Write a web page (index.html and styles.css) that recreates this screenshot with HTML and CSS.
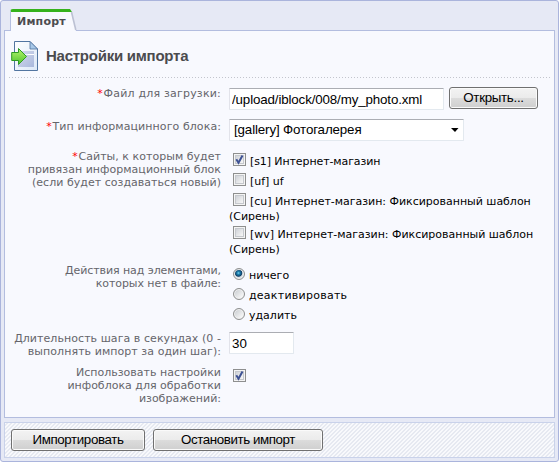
FILE: index.html
```html
<!DOCTYPE html>
<html lang="ru">
<head>
<meta charset="utf-8">
<title>Импорт</title>
<link rel="stylesheet" href="styles.css">
</head>
<body>
<form class="frame">
  <div class="tabs">
    <div class="tab"><span>Импорт</span><svg class="slope" width="9" height="22" viewBox="0 0 9 22"><path d="M0 1L2 3L7 22H0Z" fill="#f8f9fe"/><path d="M0 0H1L3 3H0Z" fill="#35b21c"/><path d="M2.500 3L6.800 21" stroke="#bcc1d3" stroke-width="1.600" fill="none"/></svg></div>
  </div>
  <main class="panel">
    <header class="title">
      <svg class="icon" width="28" height="31" viewBox="0 0 28 31">
        <defs>
          <linearGradient id="page" x2="1" y2="1"><stop stop-color="#fff"/><stop offset="1" stop-color="#dce8f7"/></linearGradient>
          <linearGradient id="block" x2="1" y2="1"><stop stop-color="#d5dbed"/><stop offset="1" stop-color="#a9b8dc"/></linearGradient>
          <linearGradient id="arrow" x2="0" y2="1"><stop stop-color="#b4f56c"/><stop offset="1" stop-color="#4fc32c"/></linearGradient>
        </defs>
        <path d="M3.500 .5H19L26.500 8V29.500H3.500Z" fill="url(#page)" stroke="#5275a0"/>
        <path d="M19 .5V8H26.500Z" fill="#a8c8e8" stroke="#5275a0" stroke-width=".8"/>
        <path d="M7 10H23V13H7ZM7 14H23V26H7Z" fill="url(#block)"/>
        <path d="M17 13.500H23" stroke="#fff"/>
        <path d="M.7 11.500H7.500V7.500L15.500 15.500L7.500 23.500V19.500H.7Z" fill="url(#arrow)" stroke="#2d9b22"/>
      </svg>
      <h1>Настройки импорта</h1>
    </header>
    <div class="row file">
      <div class="label"><b>*</b>Файл для загрузки:</div>
      <div class="value line"><input class="field path" type="text" value="/upload/iblock/008/my_photo.xml"><button type="button" class="button open">Открыть...</button></div>
    </div>
    <div class="row kind">
      <div class="label"><b>*</b>Тип информацинного блока:</div>
      <div class="value"><div class="field select"><span>[gallery] Фотогалерея</span><svg width="8" height="4" viewBox="0 0 8 4"><path d="M0 0H7.500L4 4Z"/></svg></div></div>
    </div>
    <div class="row sites">
      <div class="label"><b>*</b>Сайты, к которым будет<br>привязан информационный блок<br>(если будет создаваться новый)</div>
      <div class="value">
        <label class="site first"><i class="check"><svg width="11" height="11" viewBox="0 0 11 11"><path d="M2.300 5.200L4.500 8.700L8.500 1.500" /></svg></i><span>[s1] Интернет-магазин</span></label>
        <label class="site"><i class="check"></i><span>[uf] uf</span></label>
        <label class="site"><i class="check"></i><span>[cu] Интернет-магазин: Фиксированный шаблон</span></label>
        <div class="wrap">(Сирень)</div>
        <label class="site"><i class="check"></i><span>[wv] Интернет-магазин: Фиксированный шаблон</span></label>
        <div class="wrap">(Сирень)</div>
      </div>
    </div>
    <div class="row actions">
      <div class="label">Действия над элементами,<br>которых нет в файле:</div>
      <div class="value">
        <label class="option"><i class="radio on"></i><span>ничего</span></label>
        <label class="option wide"><i class="radio"></i><span>деактивировать</span></label>
        <label class="option"><i class="radio"></i><span>удалить</span></label>
      </div>
    </div>
    <div class="row step">
      <div class="label">Длительность шага в секундах (0 -<br>выполнять импорт за один шаг):</div>
      <div class="value"><input class="field seconds" type="text" value="30"></div>
    </div>
    <div class="row images">
      <div class="label">Использовать настройки<br>инфоблока для обработки<br>изображений:</div>
      <div class="value"><i class="check"><svg width="11" height="11" viewBox="0 0 11 11"><path d="M2.300 5.200L4.500 8.700L8.500 1.500" /></svg></i></div>
    </div>
  </main>
  <footer class="buttons">
    <button type="button" class="button start">Импортировать</button>
    <button type="button" class="button stop">Остановить импорт</button>
  </footer>
</form>
</body>
</html>
```
FILE: styles.css
```css
* { box-sizing: border-box; }
body { margin: 0; font: 11px/13px "DejaVu Sans", sans-serif; color: #000; }
.frame {
  display: flex; flex-direction: column;
  width: 559px; height: 462px; padding: 0 3px;
  background: #e6e9f5; border: 1px solid #aab4dc; border-radius: 3px;
  overflow: hidden;
}
.tabs { display: flex; align-items: flex-end; height: 29px; padding-left: 6px; flex: none; }
.tab {
  position: relative; z-index: 1; width: 59px; height: 22px; margin-bottom: -1px;
  padding: 3px 0 0 6px; background: #f8f9fe;
  border-top: 3px solid #35b21c; border-left: 1px solid #b5bfe0; border-top-left-radius: 3px;
  font-weight: bold; line-height: 14px; color: #4c4c50; letter-spacing: .2px; white-space: nowrap;
}
.slope { position: absolute; left: 58px; top: -3px; }
.panel { width: 551px; height: 388px; flex: none; border: 1px solid #b3bddf; background: #f8f9fe; }
.title {
  display: flex; height: 47px; margin: 0 4px; padding: 10px 0 0 2px;
  background: repeating-linear-gradient(90deg, #c3c5cd 0 1px, transparent 1px 3px) 0 100% / 100% 1px no-repeat;
}
.icon { flex: none; }
h1 { margin: 5px 0 0 7px; font: bold 15px/20px "Liberation Sans", sans-serif; color: #4b4b4e; letter-spacing: -.25px; white-space: nowrap; }
.row { display: grid; grid-template-columns: 216px 1fr; column-gap: 8px; }
.label { text-align: right; color: #65656b; white-space: nowrap; }
.label b { font-weight: normal; color: #f00; letter-spacing: .8px; }
.value { white-space: nowrap; }
.file { height: 41px; padding-top: 9px; }
.file .label { letter-spacing: .2px; }
.line { display: flex; gap: 5px; }
.kind { height: 31px; }
.kind .label { padding-top: 1px; letter-spacing: .08px; }
.sites { height: 114px; }
.sites .label { letter-spacing: .03px; }
.sites .value { padding-top: 3px; }
.actions { height: 68px; }
.actions .label { letter-spacing: -.08px; }
.actions .value { padding-top: 4px; }
.step { height: 34px; }
.step .label { letter-spacing: .06px; }
.images .value { padding: 3px 0 0 4px; }
.field {
  display: block; height: 22px; margin: 0; padding: 0 2px; background: #fff;
  border: 1px solid #e3e9ef; border-top-color: #abadb3; border-left-color: #e2e3ea; border-radius: 1px;
  font: 13.33px/20px "Liberation Sans", sans-serif; color: #000;
}
.path { width: 215px; margin-top: 1px; letter-spacing: -.13px; }
.seconds { width: 65px; }
.select { display: flex; align-items: center; justify-content: space-between; width: 235px; padding: 0 4px; letter-spacing: -.13px; }
.button {
  height: 22px; padding: 0; border: 1px solid #707070; border-radius: 3px;
  background: linear-gradient(#f3f3f3, #ebebeb 50%, #dcdcdc 50%, #cfcfcf);
  box-shadow: inset 0 0 0 1px #fafafa;
  font: 13.33px/18px "Liberation Sans", sans-serif; color: #000; white-space: nowrap;
}
.open { width: 89px; letter-spacing: -.3px; }
.site { display: flex; height: 20px; padding-left: 4px; letter-spacing: -.02px; }
.first { letter-spacing: -.1px; }
.site span { margin: 2px 0 0 4px; }
.wrap { height: 13px; margin-top: -3px; margin-bottom: 3px; }
.check {
  flex: none; display: block; width: 13px; height: 13px;
  border: 1px solid #8e8f8f; background: linear-gradient(135deg, #c4c8cf, #f6f6f6 80%);
  box-shadow: inset 0 0 0 1px #f4f4f4, inset 0 0 0 2px #c5c8cd;
}
.check svg { display: block; fill: none; stroke: #3e5294; stroke-width: 2; }
.option { display: flex; height: 20px; padding-left: 4px; }
.option span { margin: 1px 0 0 4px; }
.wide { letter-spacing: .25px; }
.radio {
  flex: none; width: 12px; height: 12px; border: 1px solid #8e8f8f; border-radius: 50%;
  background: linear-gradient(135deg, #c4c8cd, #f6f6f6 80%); box-shadow: inset 0 0 0 1px #f1f1f1;
}
.radio.on { background: radial-gradient(circle at 45% 40%, #7bd0ee 0, #1a7fae 1.5px, #123f66 3.3px, #d9dee4 4.2px); }
.buttons {
  display: flex; gap: 8px; width: 551px; height: 36px; margin-top: 4px; padding: 6px; flex: none;
  border: 1px solid #c9d2ea;
  background: repeating-linear-gradient(135deg, #f8f9fc 0 1.414px, #e6e9f1 1.414px 2.828px);
}
.start { width: 134px; letter-spacing: -.38px; }
.stop { width: 170px; letter-spacing: -.4px; }
```
